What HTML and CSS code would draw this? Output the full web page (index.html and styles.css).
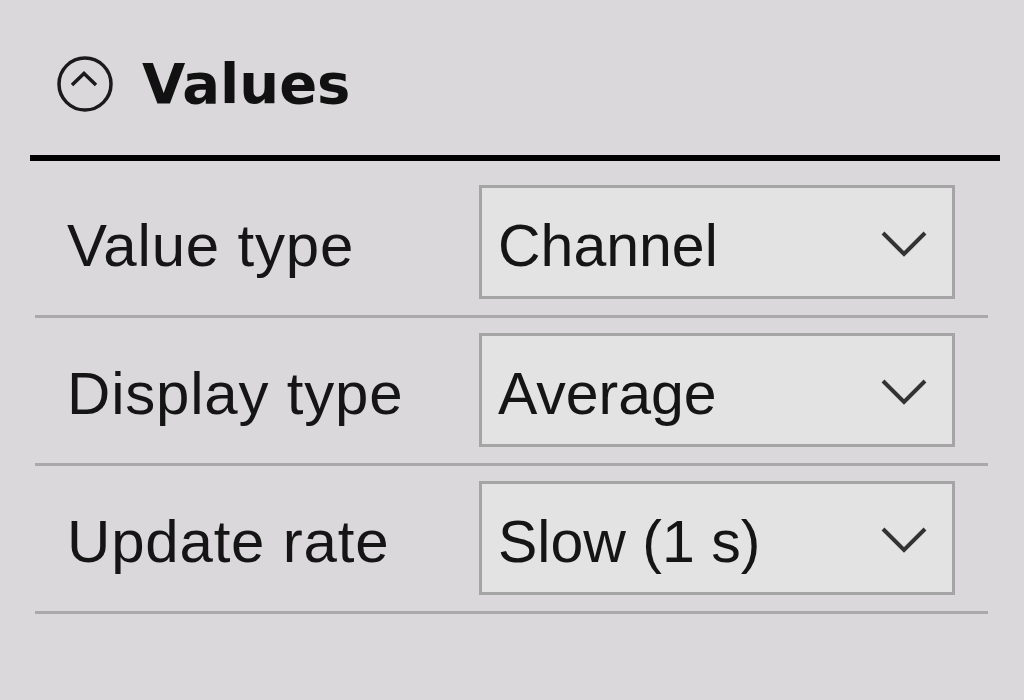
FILE: index.html
```html
<!DOCTYPE html>
<html lang="en">
<head>
    <meta charset="UTF-8">
    <title>Values</title>
    <link rel="stylesheet" href="styles.css">
</head>
<body>
    <div class="panel">
        <div class="panel-header">
            <svg class="collapse-icon" width="58" height="58" viewBox="0 0 58 58">
                <circle cx="29" cy="29" r="26" fill="none" stroke="#1a1a1a" stroke-width="3.5"/>
                <path d="M16 30 L28 18.5 L40 30" fill="none" stroke="#1a1a1a" stroke-width="3.5"/>
            </svg>
            <span class="panel-title">Values</span>
        </div>

        <div class="prop-list">
            <div class="prop-row">
                <div class="prop-label">Value type</div>
                <div class="prop-select">
                    <span class="select-text">Channel</span>
                    <svg class="select-arrow" width="46" height="28" viewBox="0 0 46 28">
                        <path d="M2 3 L23 24 L44 3" fill="none" stroke="#333" stroke-width="4"/>
                    </svg>
                </div>
            </div>
            <div class="prop-row">
                <div class="prop-label">Display type</div>
                <div class="prop-select">
                    <span class="select-text">Average</span>
                    <svg class="select-arrow" width="46" height="28" viewBox="0 0 46 28">
                        <path d="M2 3 L23 24 L44 3" fill="none" stroke="#333" stroke-width="4"/>
                    </svg>
                </div>
            </div>
            <div class="prop-row">
                <div class="prop-label">Update rate</div>
                <div class="prop-select">
                    <span class="select-text">Slow (1 s)</span>
                    <svg class="select-arrow" width="46" height="28" viewBox="0 0 46 28">
                        <path d="M2 3 L23 24 L44 3" fill="none" stroke="#333" stroke-width="4"/>
                    </svg>
                </div>
            </div>
        </div>
    </div>
</body>
</html>
```

FILE: styles.css
```css
/* General */
html, body {
    margin: 0;
    padding: 0;
    height: 100%;
    background: #dad8db;
}

body {
    font-family: "Liberation Sans", Arial, sans-serif;
    color: #151515;
}

.panel {
    padding: 0 24px 0 30px;
}

/* Header with collapse button */
.panel-header {
    box-sizing: border-box;
    height: 161px;
    padding-top: 12px;
    padding-left: 26px;
    display: flex;
    align-items: center;
    gap: 28px;
    border-bottom: 6px solid #000;
}

.collapse-icon {
    display: block;
    flex-shrink: 0;
}

.panel-title {
    font-family: "DejaVu Sans", Verdana, sans-serif;
    font-weight: bold;
    font-size: 56px;
    line-height: 1;
    color: #111;
}

/* Property rows */
.prop-list {
    margin: 0 12px 0 5px;
}

.prop-row {
    display: grid;
    grid-template-columns: 444px 476px;
    padding: 15px 0 16px;
    border-bottom: 3px solid #a9a9a9;
}

.prop-row:first-child {
    padding-top: 24px;
}

.prop-label {
    padding-left: 32px;
    padding-top: 8px;
    font-size: 60px;
    letter-spacing: 0.8px;
    line-height: 1;
    align-self: center;
}

.prop-select {
    box-sizing: border-box;
    height: 114px;
    display: flex;
    align-items: center;
    padding: 0 25px 0 16px;
    background: #e3e3e3;
    border: 3px solid #a5a5a5;
}

.select-text {
    font-size: 59px;
    line-height: 1;
    padding-top: 8px;
}

.select-arrow {
    display: block;
    margin-left: auto;
    margin-top: 4px;
}
```
